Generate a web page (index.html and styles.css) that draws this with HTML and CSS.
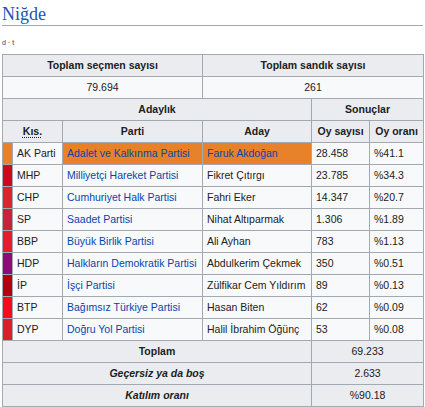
FILE: index.html
```html
<!DOCTYPE html>
<html lang="tr">
<head>
<meta charset="utf-8">
<title>Niğde</title>
<link rel="stylesheet" href="styles.css">
</head>
<body>
<h2 class="heading">Niğde</h2>
<div class="navbar"><a class="nav-d" href="#">d</a> · <a class="nav-t" href="#">t</a></div>
<table class="wikitable">
  <colgroup>
    <col class="c-sw"><col class="c-kis"><col class="c-parti"><col class="c-aday"><col class="c-oy"><col class="c-oran">
  </colgroup>
  <tr>
    <th colspan="3">Toplam seçmen sayısı</th>
    <th colspan="3">Toplam sandık sayısı</th>
  </tr>
  <tr>
    <td colspan="3" class="center">79.694</td>
    <td colspan="3" class="center">261</td>
  </tr>
  <tr>
    <th colspan="4">Adaylık</th>
    <th colspan="2">Sonuçlar</th>
  </tr>
  <tr>
    <th colspan="2"><abbr class="abbr" title="Kısaltma">Kıs.</abbr></th>
    <th>Parti</th>
    <th>Aday</th>
    <th>Oy sayısı</th>
    <th>Oy oranı</th>
  </tr>
  <tr>
    <td class="sw sw-akp"></td><td>AK Parti</td>
    <td class="win"><a href="#">Adalet ve Kalkınma Partisi</a></td>
    <td class="win"><a href="#">Faruk Akdoğan</a></td>
    <td>28.458</td><td>%41.1</td>
  </tr>
  <tr>
    <td class="sw sw-mhp"></td><td>MHP</td>
    <td><a href="#">Milliyetçi Hareket Partisi</a></td>
    <td>Fikret Çıtırgı</td>
    <td>23.785</td><td>%34.3</td>
  </tr>
  <tr>
    <td class="sw sw-chp"></td><td>CHP</td>
    <td><a href="#">Cumhuriyet Halk Partisi</a></td>
    <td>Fahri Eker</td>
    <td>14.347</td><td>%20.7</td>
  </tr>
  <tr>
    <td class="sw sw-sp"></td><td>SP</td>
    <td><a href="#">Saadet Partisi</a></td>
    <td>Nihat Altıparmak</td>
    <td>1.306</td><td>%1.89</td>
  </tr>
  <tr>
    <td class="sw sw-bbp"></td><td>BBP</td>
    <td><a href="#">Büyük Birlik Partisi</a></td>
    <td>Ali Ayhan</td>
    <td>783</td><td>%1.13</td>
  </tr>
  <tr>
    <td class="sw sw-hdp"></td><td>HDP</td>
    <td><a href="#">Halkların Demokratik Partisi</a></td>
    <td>Abdulkerim Çekmek</td>
    <td>350</td><td>%0.51</td>
  </tr>
  <tr>
    <td class="sw sw-ip"></td><td>İP</td>
    <td><a href="#">İşçi Partisi</a></td>
    <td>Zülfikar Cem Yıldırım</td>
    <td>89</td><td>%0.13</td>
  </tr>
  <tr>
    <td class="sw sw-btp"></td><td>BTP</td>
    <td><a href="#">Bağımsız Türkiye Partisi</a></td>
    <td>Hasan Biten</td>
    <td>62</td><td>%0.09</td>
  </tr>
  <tr>
    <td class="sw sw-dyp"></td><td>DYP</td>
    <td><a href="#">Doğru Yol Partisi</a></td>
    <td>Halil İbrahim Öğünç</td>
    <td>53</td><td>%0.08</td>
  </tr>
  <tr>
    <th colspan="4">Toplam</th>
    <td colspan="2" class="center grey">69.233</td>
  </tr>
  <tr>
    <th colspan="4" class="it">Geçersiz ya da boş</th>
    <td colspan="2" class="center grey">2.633</td>
  </tr>
  <tr>
    <th colspan="4" class="it">Katılım oranı</th>
    <td colspan="2" class="center grey">%90.18</td>
  </tr>
</table>
</body>
</html>
```

FILE: styles.css
```css
html, body {
  margin: 0;
  padding: 0;
  background: #ffffff;
}

body {
  padding: 0 2px;
  color: #202122;
  font-family: "Liberation Sans", Arial, sans-serif;
}

.heading {
  margin: 0;
  padding-top: 3px;
  font-family: "Liberation Serif", "Times New Roman", serif;
  font-weight: normal;
  font-size: 18px;
  line-height: 22px;
  color: #2451b0;
  border-bottom: 1px solid #a2a9b1;
}

.navbar {
  margin-top: 13px;
  font-size: 7px;
  line-height: 8px;
  color: #202122;
}

.navbar a {
  text-decoration: none;
}

.nav-d { color: #0645ad; }
.nav-t { color: #ba0000; }

.wikitable {
  margin-top: 7px;
  border-collapse: collapse;
  table-layout: fixed;
  width: 421px;
  background: #f8f9fa;
  border: 1px solid #a2a9b1;
  font-size: 10.5px;
  line-height: 17px;
}

.c-sw { width: 10px; }
.c-kis { width: 50px; }
.c-parti { width: 140px; }
.c-aday { width: 109px; }
.c-oy { width: 58px; }
.c-oran { width: 54px; }

.wikitable th,
.wikitable td {
  border: 1px solid #a2a9b1;
  padding: 2px 4px;
  height: 17px;
  white-space: nowrap;
  overflow: hidden;
}

.wikitable th {
  background: #eaecf0;
  font-weight: bold;
  text-align: center;
}

.wikitable td {
  text-align: left;
}

.wikitable a {
  color: #0645ad;
  text-decoration: none;
}

.center { text-align: center; }
.wikitable td.center { text-align: center; }
.grey { background: #eaecf0; }
.it { font-style: italic; }

.abbr {
  text-decoration: underline dotted;
  text-underline-offset: 2px;
}

.wikitable td.sw { padding: 0; }
.win { background: #e8822a; }

.sw-akp { background: #e8822a; }
.sw-mhp { background: #cc0a1e; }
.sw-chp { background: #d9262c; }
.sw-sp  { background: #c8213c; }
.sw-bbp { background: #e51c2c; }
.sw-hdp { background: #8e0a7c; }
.sw-ip  { background: #b2000e; }
.sw-btp { background: #f50a1e; }
.sw-dyp { background: #d92028; }
```
